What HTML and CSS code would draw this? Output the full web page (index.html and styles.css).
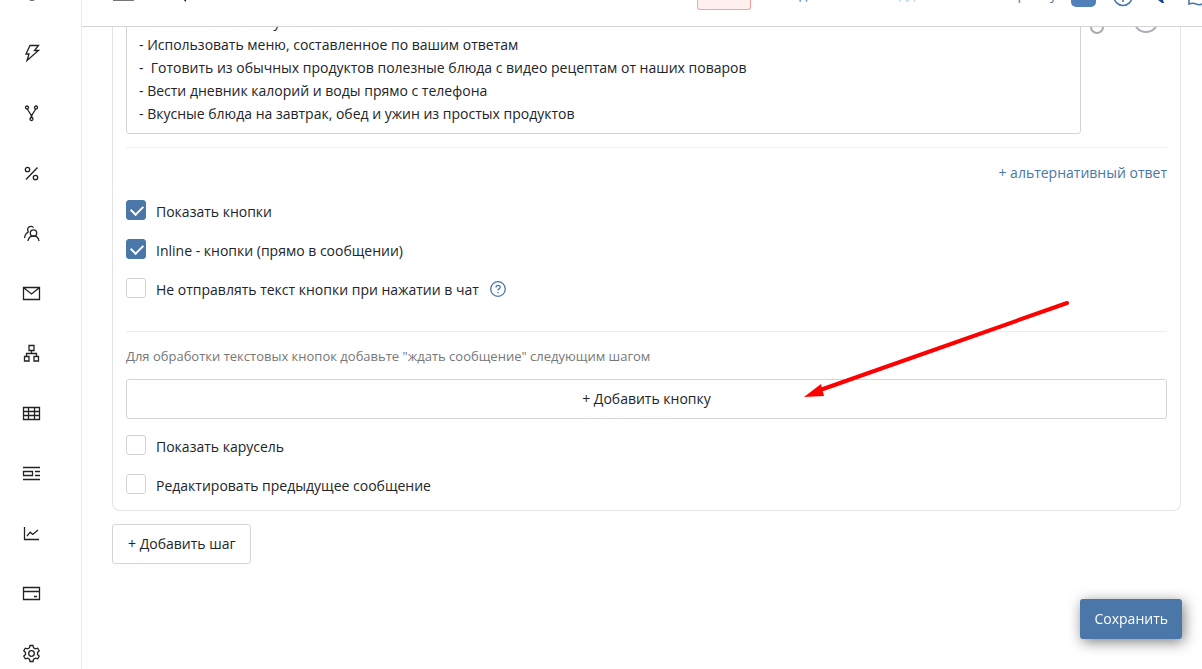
FILE: index.html
```html
<!DOCTYPE html>
<html lang="ru">
<head>
  <meta charset="UTF-8">
  <meta name="viewport" content="width=device-width, initial-scale=1.0">
  <title>Редактор шага</title>
  <link rel="stylesheet" href="styles.css">
</head>
<body>
  <nav class="sidebar">
    <a href="#" aria-label="Диалоги"><svg viewBox="0 0 20 20"><circle cx="10" cy="11" r="6"/></svg></a>
    <a href="#" aria-label="Триггеры"><svg viewBox="0 0 20 20"><path d="M8 2.500h8.500L12.500 7.500h4L5 17.500 7 11H4z"/></svg></a>
    <a href="#" aria-label="Сценарии"><svg viewBox="0 0 20 20"><circle cx="5" cy="4.500" r="1.500"/><circle cx="14" cy="4.500" r="1.500"/><circle cx="9.500" cy="16" r="1.500"/><path d="M5.500 6c.5 3 4 4 4 8.500C9.500 10 13 9 13.500 6"/></svg></a>
    <a href="#" aria-label="Скидки"><svg viewBox="0 0 20 20"><circle cx="5.500" cy="6.500" r="2.200"/><circle cx="13.500" cy="14.500" r="2.200"/><path d="M15.500 4.500 4 16.500"/></svg></a>
    <a href="#" aria-label="Клиенты"><svg viewBox="0 0 20 20"><circle cx="11.500" cy="10" r="3.200"/><path d="M6 18c.5-3.500 2.500-5 5.500-5s5 1.500 5.500 5M6.500 9A3.300 3.300 0 1 1 11.500 4.700M2.500 15C3 12 4 10 6.500 9.200"/></svg></a>
    <a href="#" aria-label="Рассылки"><svg viewBox="0 0 20 20"><path d="M1.500 4.500h16v12h-16zM2 5l7.500 6L17 5"/></svg></a>
    <a href="#" aria-label="Структура"><svg viewBox="0 0 20 20"><path d="M7 2.500h5v5H7zM2.500 13.500H7V18H2.500zM12 13.500h4.500V18H12zM9.500 7.500v3M4.500 13.500v-3h10v3"/></svg></a>
    <a href="#" aria-label="Таблицы"><svg viewBox="0 0 20 20"><path d="M1.500 4.500h16v12h-16zM1.500 8.500h16M1.500 12.500h16M6.500 4.500v12M12.500 4.500v12"/></svg></a>
    <a href="#" aria-label="Формы"><svg viewBox="0 0 20 20"><path d="M1 4.500h17M1 16.500h17M1.500 8.500h9v4h-9zM13 8.500h5M13 12.500h5"/></svg></a>
    <a href="#" aria-label="Статистика"><svg viewBox="0 0 20 20"><path d="M2.500 4v12.500H17M5 13l3.200-3.800 2.600 2.300L16 7"/></svg></a>
    <a href="#" aria-label="Оплата"><svg viewBox="0 0 20 20"><path d="M1.500 4.500h16v12h-16zM1.500 8.500h16M12 13.500h3"/></svg></a>
    <a href="#" aria-label="Настройки"><svg viewBox="0 0 20 20"><circle cx="9.500" cy="10.500" r="2.800"/><path d="M8 2.500h3l.6 2.400 1.700 1 2.400-.7 1.500 2.600-1.700 1.700v2l1.700 1.700-1.500 2.600-2.400-.7-1.700 1-.6 2.400H8l-.6-2.400-1.700-1-2.400.7-1.500-2.600 1.700-1.700v-2L1.800 7.800l1.500-2.600 2.400.7 1.700-1z"/></svg></a>
  </nav>

  <main class="main">
    <header class="topbar">
      <svg class="topbar-left" viewBox="0 0 80 12"><path class="menu-line" d="M0 0h21"/><path class="menu-mark" d="M66 -2c2 0 4 1 7 4V-2z"/></svg>
      <div class="topbar-right">
        <span class="status"></span>
        <span class="crumb">д</span>
        <span class="crumb muted">дд</span>
        <span class="crumb">р</span>
        <span class="crumb">у</span>
        <svg class="topbar-icons" viewBox="0 0 140 12">
          <rect class="fill" x="9" y="-18" width="25" height="25" rx="5"/>
          <circle class="line" cx="61" cy="-3.500" r="9"/>
          <path class="line" d="M61 -4v6"/>
          <path class="dark" d="M96 0h5l1 3h-2z"/>
          <path class="line" d="M127 -4v8c3-1 5-1 7 0s5 1 8-1"/>
        </svg>
      </div>
    </header>

    <div class="content">
      <section class="card">
        <div class="message">
          <textarea class="message-text" rows="5" aria-label="Текст сообщения">
                                     у
- Использовать меню, составленное по вашим ответам
-  Готовить из обычных продуктов полезные блюда с видео рецептам от наших поваров
- Вести дневник калорий и воды прямо с телефона
- Вкусные блюда на завтрак, обед и ужин из простых продуктов</textarea>
          <svg class="message-tools" viewBox="0 0 86 38"><path class="clip" d="M10 18v6a6 6 0 0 0 12 0v-6"/><circle class="smile" cx="65" cy="17" r="12"/></svg>
        </div>

        <hr class="divider">
        <a class="alt-link" href="#">+ альтернативный ответ</a>

        <div class="checks">
          <div class="check">
            <input type="checkbox" id="show-buttons" checked>
            <label for="show-buttons">Показать кнопки</label>
          </div>
          <div class="check">
            <input type="checkbox" id="inline-buttons" checked>
            <label for="inline-buttons">Inline - кнопки (прямо в сообщении)</label>
          </div>
          <div class="check">
            <input type="checkbox" id="no-text">
            <label for="no-text">Не отправлять текст кнопки при нажатии в чат</label>
            <svg class="help" viewBox="0 0 16 16"><circle cx="8" cy="8" r="7.300"/><path d="M6 6.500c0-3 4.200-2.700 4.200-.3C10.200 7.700 8 7.800 8 9.500M8 11v1.200"/></svg>
          </div>
        </div>

        <hr class="divider wide">
        <p class="hint">Для обработки текстовых кнопок добавьте "ждать сообщение" следующим шагом</p>
        <button type="button" class="btn btn-block">+ Добавить кнопку</button>

        <div class="checks">
          <div class="check">
            <input type="checkbox" id="carousel">
            <label for="carousel">Показать карусель</label>
          </div>
          <div class="check">
            <input type="checkbox" id="edit-previous">
            <label for="edit-previous">Редактировать предыдущее сообщение</label>
          </div>
        </div>
      </section>

      <button type="button" class="btn">+ Добавить шаг</button>
    </div>
  </main>

  <button type="button" class="btn-save">Сохранить</button>

  <svg class="arrow" viewBox="0 0 270 100"><path class="arrow-line" d="M264 5 20 91"/><path class="arrow-head" d="M1 99l17-13 3 12z"/></svg>
</body>
</html>
```
FILE: styles.css
```css
* {
  box-sizing: border-box;
}
body {
  display: flex;
  height: 100vh;
  margin: 0;
  overflow: hidden;
  font-family: "Open Sans", "Noto Sans", sans-serif;
  font-size: 14px;
  line-height: 24px;
  color: #212529;
  background-color: #fff;
}
a {
  color: #4a76a8;
  text-decoration: none;
}

/* Sidebar */
.sidebar {
  flex: none;
  width: 82px;
  overflow: hidden;
  border-right: 1px solid #ebebee;
}
.sidebar a {
  display: flex;
  align-items: center;
  height: 60px;
  padding-left: 22px;
}
.sidebar a:first-child {
  margin-top: -37px;
}
.sidebar svg {
  width: 20px;
  height: 20px;
  fill: none;
  stroke: #222;
  stroke-width: 1.3;
}

/* Top bar */
.main {
  flex: 1;
  min-width: 0;
}
.topbar {
  display: flex;
  justify-content: space-between;
  height: 27px;
  padding-left: 31px;
  overflow: hidden;
  border-bottom: 1px solid #d5d5d5;
}
.topbar-left {
  width: 80px;
  height: 12px;
}
.menu-line {
  stroke: #777;
  stroke-width: 2;
}
.menu-mark {
  fill: #222;
}
.topbar-right {
  display: flex;
}
.status {
  width: 54px;
  height: 10px;
  margin-right: 48px;
  border: 1px solid #ff9f9f;
  border-top: 0;
  border-radius: 0 0 3px 3px;
  background-color: #ffefef;
}
.crumb {
  height: 24px;
  margin-top: -18px;
  margin-right: 92px;
  color: #4a76a8;
}
.crumb.muted {
  margin-right: 102px;
  color: #c0d0e4;
}
.crumb:nth-of-type(4) {
  margin-right: 24px;
}
.crumb:nth-of-type(5) {
  margin-right: 5px;
}
.topbar-icons {
  width: 140px;
  height: 12px;
}
.topbar-icons .fill {
  fill: #5181b8;
}
.topbar-icons .line {
  fill: none;
  stroke: #4a76a8;
  stroke-width: 1.6;
}
.topbar-icons .dark {
  fill: #1b4488;
}

/* Step card */
.content {
  padding: 0 21px 0 30px;
  overflow: hidden;
}
.card {
  margin-bottom: 13px;
  padding: 0 13px 12px;
  border: 1px solid #e1e3e6;
  border-top: 0;
  border-radius: 0 0 8px 8px;
}
.message {
  display: flex;
  margin-top: -24px;
}
.message-text {
  flex: 1;
  display: block;
  height: 131px;
  padding: 6px 12px;
  border: 1px solid #d3d3d3;
  border-radius: 3px;
  font: inherit;
  line-height: 23px;
  color: inherit;
  resize: none;
  overflow: hidden;
}
.message-tools {
  width: 86px;
  height: 38px;
  fill: none;
}
.clip {
  stroke: #aaa;
  stroke-width: 2;
}
.smile {
  stroke: #a9adb9;
  stroke-width: 2;
}
.divider {
  height: 1px;
  margin: 13px 0;
  border: 0;
  background-color: #f0f0f0;
}
.divider.wide {
  margin: 29px 0 12px;
  background-color: #ececec;
}
.alt-link {
  display: block;
  margin-bottom: 15px;
  text-align: right;
}
.checks {
  display: flex;
  flex-direction: column;
  gap: 15px;
}
.check {
  display: flex;
  height: 24px;
}
.check input {
  appearance: none;
  position: relative;
  width: 20px;
  height: 20px;
  margin: 0 10px 0 0;
  border: 1px solid #d3d3d3;
  border-radius: 3px;
  background-color: #fff;
}
.check input:checked {
  border-color: #4a76a8;
  background-color: #4a76a8;
}
.check input:checked::after {
  content: "";
  position: absolute;
  left: 6px;
  top: 2px;
  width: 6px;
  height: 10px;
  border: solid #fff;
  border-width: 0 2px 2px 0;
  transform: rotate(45deg);
}
.help {
  width: 16px;
  height: 16px;
  margin: 3px 0 0 11px;
  fill: none;
  stroke: #4a76a8;
  stroke-width: 1.3;
}
.hint {
  margin: 0 0 11px;
  font-size: 13px;
  color: #777;
}

/* Buttons */
.btn {
  height: 40px;
  padding: 0 15px;
  border: 1px solid #d5d5d5;
  border-radius: 3px;
  font: inherit;
  color: inherit;
  background-color: #fff;
  cursor: pointer;
}
.btn-block {
  display: block;
  width: 100%;
  margin-bottom: 16px;
}
.btn-save {
  position: fixed;
  right: 20px;
  bottom: 30px;
  height: 40px;
  padding: 0 14px;
  border: 0;
  border-radius: 3px;
  font: inherit;
  color: #fff;
  background-color: #4a76a8;
  box-shadow: 2px 3px 14px rgba(0, 0, 0, 0.5);
  cursor: pointer;
}

/* Pointer to the add button */
.arrow {
  position: absolute;
  left: 803px;
  top: 298px;
  width: 270px;
  height: 100px;
  pointer-events: none;
}
.arrow-line {
  stroke: #f00;
  stroke-width: 4;
  stroke-linecap: round;
}
.arrow-head {
  fill: #f00;
}
```
